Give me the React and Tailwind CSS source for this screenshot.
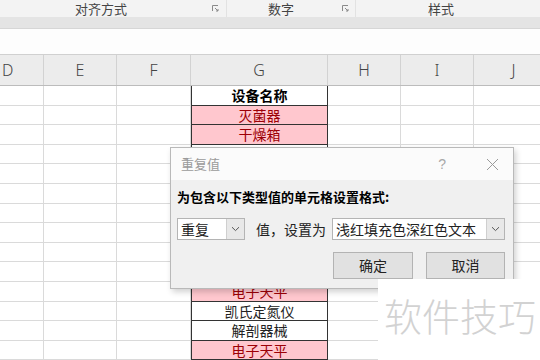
import React from 'react';

const cols = [
    { key: 'D', w: 44 },
    { key: 'E', w: 73 },
    { key: 'F', w: 74 },
    { key: 'G', w: 137 },
    { key: 'H', w: 73 },
    { key: 'I', w: 73 },
    { key: 'J', w: 80 },
];

// column G content: [text, pink?, bold?]  (rows under the dialog stay empty)
const items = [
    ['设备名称', false, true],
    ['灭菌器', true],
    ['干燥箱', true],
    ['', false],
    ['', false],
    ['', false],
    ['', false],
    ['', false],
    ['', false],
    ['', false],
    ['电子天平', true],
    ['凯氏定氮仪', false],
    ['解剖器械', false],
    ['电子天平', true],
];

const font = { fontFamily: '"Noto Sans CJK SC", "Noto Sans", sans-serif' };

const Chevron = () => (
    <svg width="9" height="6" viewBox="0 0 9 6" fill="none">
        <path d="M1 1.2 L4.5 4.6 L8 1.2" stroke="#555" strokeWidth="1" />
    </svg>
);

const Launcher = () => (
    <svg width="7" height="7" viewBox="0 0 7 7" fill="none">
        <path d="M0.5 6 V0.5 H6" stroke="#8a8a8a" strokeWidth="1" />
        <path d="M3 3 L6 6 M4 6 H6 V4" stroke="#8a8a8a" strokeWidth="1" />
    </svg>
);

const Combo = ({ text, width }) => (
    <div className="flex shrink-0 h-[22px] bg-white border border-[#b4b4b4]" style={{ width }}>
        <div className="flex-1 flex items-center pl-[3px] text-[14px] text-[#222]">{text}</div>
        <div className="w-[18px] flex items-center justify-center bg-[#e8e8e8] border-l border-[#cfcfcf]">
            <Chevron />
        </div>
    </div>
);

const Dialog = () => (
    <div className="absolute left-[170px] top-[147px] w-[344px] h-[142px] border border-[#b9b9b9] bg-[#f0f0f0] shadow-[2px_3px_6px_rgba(0,0,0,0.18)] flex flex-col">
        <div className="h-[32px] bg-[#fbfbfb] flex items-center pl-[10px] pr-[14px]">
            <span className="text-[13px] text-[#9a9a9a]">重复值</span>
            <span className="ml-auto mr-[40px] text-[14px] text-[#a8a8a8]" style={{ fontFamily: '"Liberation Sans", sans-serif' }}>?</span>
            <svg width="13" height="13" viewBox="0 0 13 13">
                <path d="M1 1 L12 12 M12 1 L1 12" stroke="#9a9a9a" strokeWidth="1" />
            </svg>
        </div>
        <div className="flex-1 flex flex-col pl-[6px] pr-[8px]">
            <div className="mt-[8px] text-[13px] font-bold text-black leading-[18px]">为包含以下类型值的单元格设置格式:</div>
            <div className="mt-[12px] flex items-center">
                <Combo text="重复" width={68} />
                <span className="ml-[11px] text-[14px] text-[#222] w-[76px] shrink-0">值，设置为</span>
                <Combo text="浅红填充色深红色文本" width={173} />
            </div>
            <div className="mt-[12px] flex justify-end gap-[13px]">
                <button className="w-[80px] h-[27px] bg-[#e1e1e1] border border-[#b3b3b3] text-[14px] text-[#222]">确定</button>
                <button className="w-[79px] h-[27px] bg-[#e1e1e1] border border-[#b3b3b3] text-[14px] text-[#222]">取消</button>
            </div>
        </div>
    </div>
);

export default function App() {
    return (
        <div className="relative w-[540px] h-[360px] overflow-hidden bg-white" style={font}>
            {/* ribbon group labels */}
            <div className="flex h-[17px] bg-[#f3f3f3] text-[13px] text-[#444] leading-[17px]">
                <div className="w-[226px] shrink-0 relative flex justify-center">
                    <span className="mr-[24px]">对齐方式</span>
                    <span className="absolute right-[7px] top-[5px]"><Launcher /></span>
                </div>
                <div className="w-[129px] shrink-0 relative flex justify-center border-l border-[#e2e2e2]">
                    <span className="mr-[20px]">数字</span>
                    <span className="absolute right-[6px] top-[5px]"><Launcher /></span>
                </div>
                <div className="flex-1 flex justify-center border-l border-[#e2e2e2]">
                    <span className="mr-[14px]">样式</span>
                </div>
            </div>
            <div className="h-[12px] bg-[#e4e4e4] border-b border-[#d6d6d6]" />
            {/* formula bar area */}
            <div className="h-[26px] bg-[#fdfdfd] border-b border-[#d0d0d0]" />
            {/* column headers */}
            <div className="flex h-[31px] bg-[#ececec] border-b border-[#bcbcbc]">
                {cols.map((c, i) => (
                    <div
                        key={c.key}
                        className={`shrink-0 flex items-center text-[16px] text-[#444] border-r border-[#d2d2d2] ${i === 0 ? 'justify-start pl-[2px]' : 'justify-center'}`}
                        style={{ width: c.w, fontFamily: '"Noto Sans", sans-serif', fontWeight: 300 }}
                    >
                        {c.key}
                    </div>
                ))}
            </div>
            {/* grid rows */}
            {items.map(([text, pink, bold], r) => (
                <div key={r} className="flex h-[19.6px]">
                    {cols.map((c) =>
                        c.key === 'G' ? (
                            <div
                                key={c.key}
                                className={`shrink-0 flex items-center justify-center border-x border-b border-[#333] text-[14px] leading-none ${pink ? 'bg-[#ffc7ce] text-[#9c0006]' : 'bg-white text-[#222]'} ${bold ? 'font-bold text-black' : ''}`}
                                style={{ width: c.w }}
                            >
                                {text}
                            </div>
                        ) : (
                            <div key={c.key} className="shrink-0 border-r border-b border-[#dadada]" style={{ width: c.w }} />
                        )
                    )}
                </div>
            ))}
            <Dialog />
            {/* watermark */}
            <div className="absolute left-[378px] top-[279px] right-0 bottom-0 bg-white flex items-start pl-[6px] pt-[17px]">
                <span className="text-[38px] leading-none text-[#d2d2d2]" style={{ fontWeight: 300 }}>软件技巧</span>
            </div>
        </div>
    );
}
